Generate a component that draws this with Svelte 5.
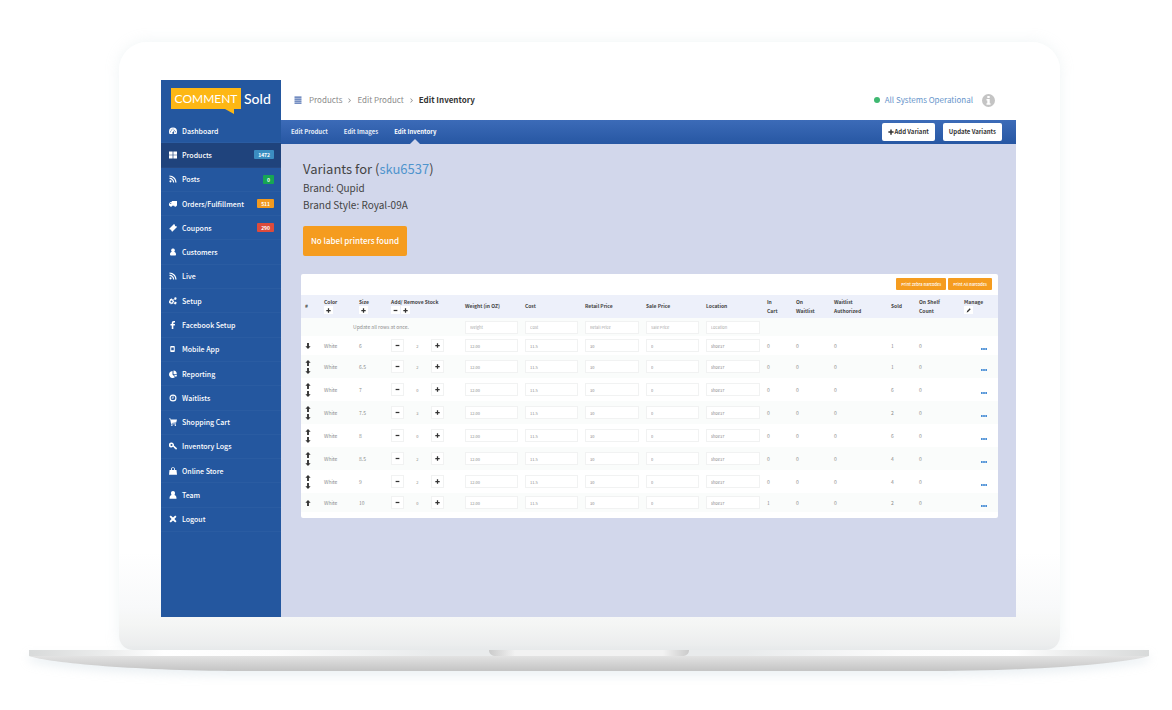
<!--
  Inventory editor for a single product, shown on the screen of a
  laptop frame. The sidebar and the variant table are data driven.
-->
<script lang="ts">
  type NavItem = {
    label: string;
    icon: string;
    badge?: string;
    tone?: "blue" | "green" | "orange" | "red";
  };

  const NAV: NavItem[] = [
    { label: "Dashboard", icon: "dashboard" },
    { label: "Products", icon: "grid", badge: "1472", tone: "blue" },
    { label: "Posts", icon: "rss", badge: "0", tone: "green" },
    { label: "Orders/Fulfillment", icon: "truck", badge: "511", tone: "orange" },
    { label: "Coupons", icon: "ticket", badge: "290", tone: "red" },
    { label: "Customers", icon: "user" },
    { label: "Live", icon: "rss" },
    { label: "Setup", icon: "cogs" },
    { label: "Facebook Setup", icon: "facebook" },
    { label: "Mobile App", icon: "mobile" },
    { label: "Reporting", icon: "pie" },
    { label: "Waitlists", icon: "clock" },
    { label: "Shopping Cart", icon: "cart" },
    { label: "Inventory Logs", icon: "key" },
    { label: "Online Store", icon: "bag" },
    { label: "Team", icon: "team" },
    { label: "Logout", icon: "close" },
  ];

  // All glyphs share a 16x16 box and are filled even-odd.
  const ICONS: Record<string, string> = {
    dashboard:
      "M8 1a8 8 0 0 0-8 8c0 2 .4 4 1.200 5.200h13.600C15.600 13 16 11 16 9a8 8 0 0 0-8-8zM3 8.500a1 1 0 1 1 0 2 1 1 0 0 1 0-2zm1.600-3.600a1 1 0 1 1 0 2 1 1 0 0 1 0-2zM8 3.200a1 1 0 1 1 0 2 1 1 0 0 1 0-2zm5 5.300a1 1 0 1 1 0 2 1 1 0 0 1 0-2zM10.600 5.600l1 .5-1.800 4.200a2 2 0 1 1-1.400-.5z",
    grid: "M0 1h7.300v6.300H0zM8.700 1H16v6.300H8.700zM0 8.700h7.300V15H0zM8.700 8.700H16V15H8.700z",
    rss: "M3 10.500a2.200 2.200 0 1 1 0 4.400 2.200 2.200 0 0 1 0-4.400zM1 5.600c5.200 0 9.400 4.200 9.400 9.400H8C8 11 5 8 1 8zM1 1c7.700 0 14 6.300 14 14h-2.400C12.600 8.600 7.400 3.400 1 3.400z",
    truck:
      "M5.500 2H16v9.500h-1.200a2.200 2.200 0 0 1-4.400 0H6.200a2.200 2.200 0 0 1-4.400 0H0V7.500L2.500 4h3zM4.500 5.300H3L1.300 7.700h3.200z",
    ticket: "M10 0l2 2a1.600 1.600 0 0 0 2.200 2.200L16 6l-9.500 9.500-2-2a1.600 1.600 0 0 0-2.200-2.200L.5 9.500z",
    user: "M8 1a3.600 3.600 0 0 1 2.300 6.500C13 8.200 14 10.500 14 13c0 1.300-.8 2-2 2H4c-1.200 0-2-.7-2-2 0-2.500 1-4.800 3.700-5.500A3.600 3.600 0 0 1 8 1z",
    cogs: "M4.500 3l1.500.1.400 1.500 1.300.6 1.200-.7 1 1.200-.9 1.200.3 1.200 1.300.5-.2 1.500-1.400.3-.6 1.200.6 1.300-1.200.9-1.200-.8-1.300.3-.6 1.300-1.500-.3-.2-1.400-1.300-.7-1.200.6-.9-1.200.8-1.200-.3-1.200L0 8.700l.2-1.500 1.500-.2.500-1.200-.7-1.300 1.200-1 1.200.8zM5 7.200a2 2 0 1 0 0 4 2 2 0 0 0 0-4zM12.500 0l1 1.200 1.600.1.300 1.300-1 1.200.3 1.400-1.400.8-1.300-.9-1.400.4-.7-1.400.9-1.100-.3-1.400 1.200-.6zM12.500 9l1 1.200 1.600.1.300 1.300-1 1.200.3 1.400-1.400.8-1.300-.9-1.400.4-.7-1.400.9-1.100-.3-1.400 1.200-.6z",
    facebook: "M12 0v3h-1.800C9 3 8.700 3.500 8.700 4.400V6H12l-.4 3H8.700v7H5.500V9H3V6h2.500V4C5.500 1.500 7 0 9.500 0z",
    mobile: "M4 2h6c1 0 1.500.5 1.500 1.500v9c0 1-.5 1.500-1.500 1.500H4c-1 0-1.500-.5-1.500-1.500v-9C2.500 2.500 3 2 4 2zm.5 3v5.500h5V5z",
    pie: "M7 2v7l5 5a7 7 0 1 1-5-12zM9 1a7 7 0 0 1 6.500 7H9zM9.500 9.500H16a7 7 0 0 1-2 4.500z",
    clock:
      "M8 1a7 7 0 1 1 0 14A7 7 0 0 1 8 1zm0 2.300a4.700 4.700 0 1 0 0 9.400 4.700 4.700 0 0 0 0-9.400zM7.300 4.500h1.600v4.700H5.300V7.700h2z",
    cart: "M0 1h3l.6 1.800H16L14.500 9 5.300 10l.2 1H14v1.500H4.300L2.300 2.600H0zM5.700 13a1.500 1.500 0 1 1 0 3 1.500 1.500 0 0 1 0-3zm7 0a1.500 1.500 0 1 1 0 3 1.500 1.500 0 0 1 0-3z",
    key: "M5 1a5 5 0 0 1 4.800 6.200L16 12.500l-1 2.500-2.300-.3-.5-1.700-2-.3-.3-1.700L8 9.500A5 5 0 1 1 5 1zM5 4a2 2 0 1 0 0 4 2 2 0 0 0 0-4z",
    bag: "M4 6V4.500C4 2 5.700.5 8 .5S12 2 12 4.500V6h3l1 9.500H0L1 6zm1.700 0h4.600V4.500C10.300 3 9.500 2.200 8 2.200S5.700 3 5.700 4.500z",
    team: "M8 0c2.500 0 4 1.800 4 4.200 0 1.500-.3 2.800-1 3.800 3 .7 4 3 4 7.500H1C1 11 2 8.700 5 8c-.7-1-1-2.300-1-3.800C4 1.800 5.500 0 8 0z",
    close: "M3.500 1L8 5.200 12.500 1 15 3.500 10.800 8l4.200 4.500-2.500 2.500L8 10.800 3.500 15 1 12.500 5.200 8 1 3.500z",
    menu: "M1 1h14v2.500H1zM1 5h14v2.500H1zM1 9h14v2.500H1zM1 13h14v2.500H1z",
    chevron: "M4 2.500L5.500 1l7 7-7 7L4 13.500 9.500 8z",
    info: "M8 0a8 8 0 1 1 0 16A8 8 0 0 1 8 0zM6.500 2.500v2.300h3V2.500zM5.500 6.300v1.600h1V11.500h-1v1.700h5v-1.700h-1V6.300z",
    plus: "M6 1h4v5h5v4h-5v5H6v-5H1V6h5z",
    minus: "M2 6h12v4H2z",
    up: "M8 0l7 7.500h-4.500V16h-5V7.500H1z",
    down: "M8 16L1 8.500h4.500V0h5v8.500H15z",
    pencil: "M12 1l3 3-8.500 8.500L2 14l1.500-4.500z",
    dots: "M0 5.500h4.500v5H0zM5.700 5.500h4.600v5H5.700zM11.500 5.500H16v5h-4.500z",
  };

  const COLUMNS = [
    { key: "order", label: "#", width: 19 },
    { key: "color", label: "Color", width: 35, tools: ["plus"] },
    { key: "size", label: "Size", width: 32, tools: ["plus"] },
    { key: "stock", label: "Add/ Remove Stock", width: 74, tools: ["minus", "plus"] },
    { key: "weight", label: "Weight (in OZ)", width: 60 },
    { key: "cost", label: "Cost", width: 60 },
    { key: "retail", label: "Retail Price", width: 61 },
    { key: "sale", label: "Sale Price", width: 60 },
    { key: "location", label: "Location", width: 61 },
    { key: "cart", label: "In Cart", width: 29 },
    { key: "waitlist", label: "On Waitlist", width: 38 },
    { key: "authorized", label: "Waitlist Authorized", width: 57 },
    { key: "sold", label: "Sold", width: 28 },
    { key: "shelf", label: "On Shelf Count", width: 45 },
    { key: "manage", label: "Manage", width: 38, tools: ["pencil"] },
  ];
  const TOTAL = COLUMNS.reduce((sum, column) => sum + column.width, 0);

  const BULK_FIELDS = ["Weight", "Cost", "Retail Price", "Sale Price", "Location"];

  const variants = $state(
    [
      { size: "6", stock: 2, cart: 0, sold: 1 },
      { size: "6.5", stock: 2, cart: 0, sold: 1 },
      { size: "7", stock: 0, cart: 0, sold: 6 },
      { size: "7.5", stock: 3, cart: 0, sold: 2 },
      { size: "8", stock: 0, cart: 0, sold: 6 },
      { size: "8.5", stock: 2, cart: 0, sold: 4 },
      { size: "9", stock: 2, cart: 0, sold: 4 },
      { size: "10", stock: 0, cart: 1, sold: 2 },
    ].map((row) => ({
      ...row,
      fields: ["12.00", "11.5", "30", "0", "shoe37"],
    })),
  );

  function move(index: number, step: number) {
    const [row] = variants.splice(index, 1);
    variants.splice(index + step, 0, row);
  }
</script>

{#snippet icon(name: string)}
  <svg class="icon" viewBox="0 0 16 16" aria-hidden="true">
    <path d={ICONS[name]} fill="currentColor" fill-rule="evenodd" />
  </svg>
{/snippet}

<div class="stage">
  <div class="lid">
    <div class="screen">
      <aside class="sidebar">
        <a class="brand" href="#home">
          <span class="brand-bubble">COMMENT</span>
          <span class="brand-name">Sold</span>
        </a>
        <nav class="nav">
          {#each NAV as item (item.label)}
            <a
              class="nav-item"
              class:active={item.label === "Products"}
              href="#{item.icon}"
            >
              {@render icon(item.icon)}
              <span class="nav-label">{item.label}</span>
              {#if item.badge}
                <span class="badge {item.tone}">{item.badge}</span>
              {/if}
            </a>
          {/each}
        </nav>
      </aside>

      <div class="main">
        <header class="topbar">
          <button type="button" class="menu" aria-label="Toggle menu">
            {@render icon("menu")}
          </button>
          <nav class="crumbs" aria-label="Breadcrumb">
            <a href="#products">Products</a>
            {@render icon("chevron")}
            <a href="#product">Edit Product</a>
            {@render icon("chevron")}
            <strong>Edit Inventory</strong>
          </nav>
          <a class="system" href="#status">
            <span class="system-dot"></span>All Systems Operational
          </a>
          <button type="button" class="info" aria-label="Information">
            {@render icon("info")}
          </button>
        </header>

        <div class="subnav">
          <nav class="tabs">
            <a href="#product">Edit Product</a>
            <a href="#images">Edit Images</a>
            <a class="current" href="#inventory">Edit Inventory</a>
          </nav>
          <button type="button" class="action">{@render icon("plus")}Add Variant</button>
          <button type="button" class="action">Update Variants</button>
        </div>

        <main class="content">
          <section class="intro">
            <h1>Variants for (<a href="#sku">sku6537</a>)</h1>
            <p>Brand: Qupid</p>
            <p>Brand Style: Royal-09A</p>
            <button type="button" class="printer">No label printers found</button>
          </section>

          <section class="panel">
            <div class="panel-tools">
              <button type="button">Print Zebra Barcodes</button>
              <button type="button">Print All Barcodes</button>
            </div>
            <table>
              <colgroup>
                {#each COLUMNS as column (column.key)}
                  <col style:width="{(column.width / TOTAL) * 100}%" />
                {/each}
              </colgroup>
              <thead>
                <tr>
                  {#each COLUMNS as column (column.key)}
                    <th class={column.key} scope="col">
                      {column.label}
                      {#if column.tools}
                        <div class="head-tools">
                          {#each column.tools as tool (tool)}
                            <button type="button" aria-label="{column.label} {tool}">
                              {@render icon(tool)}
                            </button>
                          {/each}
                        </div>
                      {/if}
                    </th>
                  {/each}
                </tr>
              </thead>
              <tbody>
                <tr class="bulk">
                  <td colspan="4">Update all rows at once.</td>
                  {#each BULK_FIELDS as field (field)}
                    <td><input class="field" placeholder={field} aria-label="{field} for all rows" /></td>
                  {/each}
                  <td colspan="6"></td>
                </tr>
                {#each variants as row, i (row.size)}
                  {@const last = i === variants.length - 1}
                  <tr class:single={i === 0 || last}>
                    <td class="order">
                      {#if i > 0}
                        <button type="button" aria-label="Move up" onclick={() => move(i, -1)}>
                          {@render icon("up")}
                        </button>
                      {/if}
                      {#if !last}
                        <button type="button" aria-label="Move down" onclick={() => move(i, 1)}>
                          {@render icon("down")}
                        </button>
                      {/if}
                    </td>
                    <td>White</td>
                    <td>{row.size}</td>
                    <td>
                      <div class="stepper">
                        <button type="button" aria-label="Remove stock" onclick={() => row.stock--}>
                          {@render icon("minus")}
                        </button>
                        <input aria-label="Stock of size {row.size}" bind:value={row.stock} />
                        <button type="button" aria-label="Add stock" onclick={() => row.stock++}>
                          {@render icon("plus")}
                        </button>
                      </div>
                    </td>
                    {#each BULK_FIELDS as field, f (field)}
                      <td>
                        <input
                          class="field"
                          aria-label="{field} of size {row.size}"
                          bind:value={row.fields[f]}
                        />
                      </td>
                    {/each}
                    <td>{row.cart}</td>
                    <td>0</td>
                    <td>0</td>
                    <td>{row.sold}</td>
                    <td>0</td>
                    <td class="manage-cell">
                      <button type="button" aria-label="Manage size {row.size}">
                        {@render icon("dots")}
                      </button>
                    </td>
                  </tr>
                {/each}
              </tbody>
            </table>
          </section>
        </main>
      </div>
    </div>
  </div>

  <svg class="base" viewBox="0 0 1120 21" preserveAspectRatio="none" aria-hidden="true">
    <defs>
      <linearGradient id="base-body" x1="0" y1="0" x2="0" y2="1">
        <stop offset="0.25" stop-color="#e4e4e4" />
        <stop offset="0.95" stop-color="#c6c6c6" />
      </linearGradient>
      <linearGradient id="base-lip" x1="0" y1="0" x2="1" y2="0">
        <stop offset="0" stop-color="#d8dada" />
        <stop offset="0.07" stop-color="#eceded" />
        <stop offset="0.12" stop-color="#ffffff" />
        <stop offset="0.22" stop-color="#fcfcfc" />
        <stop offset="0.36" stop-color="#e9ebec" />
        <stop offset="0.64" stop-color="#e9ebec" />
        <stop offset="0.78" stop-color="#fcfcfc" />
        <stop offset="0.88" stop-color="#ffffff" />
        <stop offset="0.93" stop-color="#eceded" />
        <stop offset="1" stop-color="#d8dada" />
      </linearGradient>
      <linearGradient id="base-notch" x1="0" y1="0" x2="1" y2="0">
        <stop offset="0" stop-color="#cbcbcb" />
        <stop offset="0.13" stop-color="#f2f2f2" />
        <stop offset="0.87" stop-color="#f2f2f2" />
        <stop offset="1" stop-color="#cbcbcb" />
      </linearGradient>
    </defs>
    <path d="M0 0H1120V6C1100 13 1010 21 900 21H220C110 21 20 13 0 6Z" fill="url(#base-body)" />
    <path d="M0 0H1120V6H0Z" fill="url(#base-lip)" />
    <path d="M460 0H660C660 4 657 6 653 6H467C463 6 460 4 460 0Z" fill="url(#base-notch)" />
  </svg>
</div>

<style>
  :global(body) {
    margin: 0;
    background: #fff;
  }
  .stage {
    padding: 42px 23px 24px 29px;
    font-family: "Noto Sans CJK SC", "Open Sans", sans-serif;
    font-size: 7px;
    line-height: 8px;
    color: #444;
  }
  .stage * {
    box-sizing: border-box;
  }
  a {
    color: inherit;
    text-decoration: none;
  }
  button {
    margin: 0;
    padding: 0;
    border: 0;
    background: none;
    font: inherit;
    color: inherit;
    white-space: nowrap;
    cursor: pointer;
  }
  .icon {
    display: block;
    flex: none;
    width: 8px;
    height: 8px;
  }

  /* Laptop frame */
  .lid {
    margin: 0 89px 0 90px;
    padding: 38px 44px 33px 42px;
    border-radius: 28px 28px 14px 14px;
    background: linear-gradient(#fff 84%, #f8f9fa 93%, #f4f5f4 96%, #e9ebec);
    box-shadow: 0 0 14px rgba(190, 210, 215, 0.25);
  }
  .base {
    position: relative;
    display: block;
    width: 100%;
    height: 21px;
    filter: drop-shadow(0 5px 5px rgba(180, 200, 210, 0.25));
  }
  .screen {
    display: grid;
    grid-template-columns: 120px 1fr;
    background: #d2d7eb;
  }

  /* Sidebar */
  .sidebar {
    display: flex;
    flex-direction: column;
    padding-bottom: 85px;
    background: #24579f;
    color: #fff;
  }
  .brand {
    display: flex;
    gap: 3px;
    height: 39px;
    padding: 8px 0 0 10px;
    font-family: Lato, sans-serif;
    line-height: 21px;
  }
  .brand-bubble {
    position: relative;
    width: 70px;
    height: 21px;
    background: #fdb714;
    font-size: 12px;
    text-align: center;
  }
  .brand-bubble::after {
    content: "";
    position: absolute;
    right: 7px;
    bottom: -5px;
    border-top: 5px solid #fdb714;
    border-left: 9px solid transparent;
  }
  .brand-name {
    font-size: 14px;
    font-weight: 500;
  }
  .nav {
    flex: 1;
    display: grid;
    grid-auto-rows: 1fr;
  }
  .nav-item {
    display: flex;
    align-items: center;
    gap: 5px;
    padding: 0 7px 0 8px;
    border-bottom: 1px solid rgba(255, 255, 255, 0.03);
    font-weight: 500;
  }
  .nav-item.active {
    background: #1f437c;
  }
  .nav-label {
    flex: 1;
    white-space: nowrap;
  }
  .badge {
    padding: 0 4px;
    border-radius: 1px;
    font-size: 5px;
    font-weight: 700;
    line-height: 9px;
  }
  .badge.blue {
    background: #3b8dc1;
  }
  .badge.green {
    background: #17a653;
  }
  .badge.orange {
    background: #f39a1e;
  }
  .badge.red {
    background: #dd4b3c;
  }

  /* Top bars */
  .main {
    min-width: 0;
  }
  .topbar {
    display: flex;
    align-items: center;
    height: 40px;
    padding: 0 21px 0 13px;
    background: #fff;
    font-size: 8px;
    color: #8a8a8a;
  }
  .menu {
    margin-right: 7px;
    color: #4668ad;
  }
  .crumbs {
    flex: 1;
    display: flex;
    align-items: center;
    gap: 5px;
  }
  .crumbs .icon {
    width: 5px;
    height: 5px;
  }
  .crumbs strong {
    color: #333;
  }
  .system {
    display: flex;
    align-items: center;
    gap: 5px;
    color: #6795cb;
  }
  .system-dot {
    width: 6px;
    height: 6px;
    border-radius: 50%;
    background: #3fb871;
  }
  .info {
    margin-left: 9px;
    color: #c4c4c4;
  }
  .info .icon {
    width: 13px;
    height: 13px;
  }
  .subnav {
    display: flex;
    align-items: center;
    gap: 8px;
    height: 24px;
    padding: 0 14px 0 10px;
    background: linear-gradient(#3c6bb8, #2757a3);
    font-size: 6px;
    font-weight: 700;
  }
  .tabs {
    flex: 1;
    display: flex;
    gap: 16px;
    color: #e4ebf7;
    line-height: 24px;
  }
  .tabs .current {
    position: relative;
    color: #fff;
  }
  .current::after {
    content: "";
    position: absolute;
    left: 50%;
    bottom: 0;
    margin-left: -5px;
    border: 5px solid transparent;
    border-top: 0;
    border-bottom-color: #d2d7eb;
  }
  .action {
    display: flex;
    align-items: center;
    height: 18px;
    padding: 0 6px;
    border-radius: 2px;
    background: #fff;
    color: #333;
  }
  .action .icon {
    width: 6px;
    height: 6px;
  }

  /* Heading */
  .content {
    padding: 16px 18px 99px 20px;
  }
  .intro {
    padding-left: 2px;
  }
  h1 {
    margin: 0 0 2px;
    font-size: 13px;
    font-weight: 400;
    line-height: 17px;
  }
  h1 a {
    color: #4f94cd;
  }
  p {
    margin: 0;
    font-size: 10px;
    line-height: 17px;
  }
  .printer {
    height: 30px;
    margin: 13px 0 18px;
    padding: 0 8px;
    border-radius: 2px;
    background: #f59c1f;
    font-size: 8px;
    font-weight: 500;
    color: #fff;
  }

  /* Variant table */
  .panel {
    padding-bottom: 6px;
    border-radius: 2px;
    background: #fff;
    font-size: 5px;
    line-height: 8px;
    color: #8c8c8c;
  }
  .panel-tools {
    display: flex;
    justify-content: flex-end;
    gap: 2px;
    padding: 4px 6px 5px;
  }
  .panel-tools button {
    height: 12px;
    padding: 0 5px;
    border-radius: 1px;
    background: #f59c1f;
    font-size: 4px;
    font-weight: 500;
    color: #fff;
  }
  table {
    width: 100%;
    border-collapse: collapse;
    table-layout: fixed;
  }
  th,
  td {
    padding: 0 0 0 4px;
    text-align: left;
  }
  th {
    height: 23px;
    padding-bottom: 2px;
    background: #edf0fa;
    font-weight: 700;
    line-height: 9px;
    color: #444;
  }
  th.cart {
    padding-right: 10px;
  }
  th.waitlist {
    padding-right: 12px;
  }
  th.authorized,
  th.shelf {
    padding-right: 16px;
  }
  .head-tools {
    display: flex;
    gap: 1px;
  }
  .head-tools button {
    display: grid;
    place-items: center;
    width: 9px;
    height: 8px;
    background: #fff;
    color: #333;
  }
  .head-tools .icon {
    width: 5px;
    height: 5px;
  }
  tbody tr {
    height: 23px;
  }
  tbody .single {
    height: 19px;
  }
  tbody .bulk {
    height: 18px;
  }
  tbody tr:nth-child(odd) {
    background: #fafcfb;
  }
  .bulk td:first-child {
    padding-left: 0;
    text-align: center;
  }
  .order button {
    display: block;
    margin: 2px 0;
    color: #333;
  }
  .order .icon {
    width: 6px;
    height: 6px;
  }
  input {
    display: block;
    margin: 0;
    padding: 0;
    border: 0;
    outline: 0;
    background: none;
    font: inherit;
    color: inherit;
  }
  .field {
    width: calc(100% - 3px);
    height: 13px;
    padding: 0 4px;
    border: 1px solid #f1f2f2;
    background: #fff;
    font-size: 4px;
  }
  .field::placeholder {
    color: #a8a8a8;
  }
  .stepper {
    display: flex;
    width: 53px;
  }
  .stepper input {
    flex: 1;
    min-width: 0;
    font-size: 4px;
    text-align: center;
  }
  .stepper button {
    display: grid;
    place-items: center;
    width: 13px;
    height: 13px;
    border: 1px solid #f1f2f2;
    background: #fff;
    color: #333;
  }
  .stepper .icon {
    width: 5px;
    height: 5px;
  }
  .manage-cell {
    padding: 7px 11px 0 0;
    color: #4a8fd6;
  }
  .manage-cell button {
    display: block;
    margin-left: auto;
  }
  .manage-cell .icon {
    width: 6px;
    height: 6px;
  }
</style>
